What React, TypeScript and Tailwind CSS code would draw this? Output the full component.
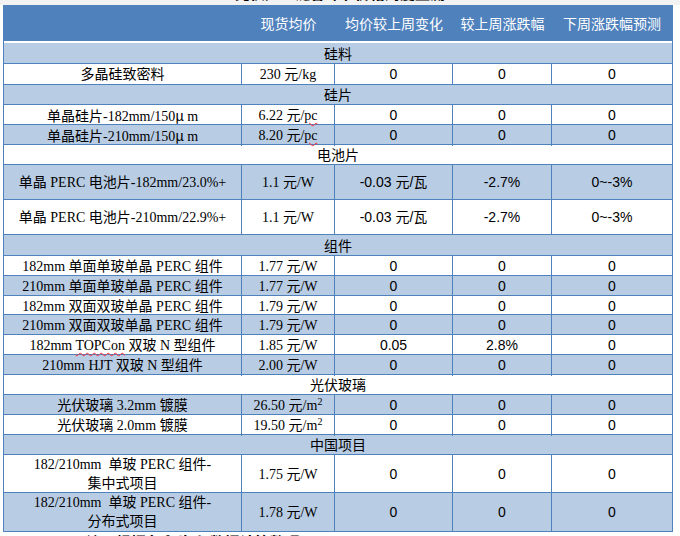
import React from 'react';

type DataRowProps = {
  name: React.ReactNode;
  price: React.ReactNode;
  change: string;
  pct: string;
  forecast: string;
  shade: boolean;
  h: string;
};

const serif = "font-['Liberation_Serif','Noto_Sans_CJK_SC',serif]";
const sans = "font-['Liberation_Sans','Noto_Sans_CJK_SC',sans-serif]";

function Section({ label, shade, h }: { label: string; shade: boolean; h: string }) {
  return (
    <div
      className={`${h} flex items-center justify-center border-b border-[#4f81bd] ${
        shade ? 'bg-[#b8cce4]' : 'bg-white'
      } font-['Noto_Sans_CJK_SC',sans-serif] text-[14px] text-black`}
    >
      {label}
    </div>
  );
}

function DataRow({ name, price, change, pct, forecast, shade, h }: DataRowProps) {
  return (
    <div
      className={`${h} grid grid-cols-[238px_93px_118px_99px_120px] border-b border-[#4f81bd] ${
        shade ? 'bg-[#b8cce4]' : 'bg-white'
      } text-[14px] text-black`}
    >
      <div className={`flex items-center justify-center border-r border-[#4f81bd] text-center leading-[19px] ${serif}`}>
        {name}
      </div>
      <div className={`flex items-center justify-center border-r border-[#4f81bd] ${serif}`}>{price}</div>
      <div className={`flex items-center justify-center border-r border-[#4f81bd] ${sans}`}>{change}</div>
      <div className={`flex items-center justify-center border-r border-[#4f81bd] ${sans}`}>{pct}</div>
      <div className={`flex items-center justify-center ${sans}`}>{forecast}</div>
    </div>
  );
}

const Squiggle = ({ children }: { children: React.ReactNode }) => (
  <span className="underline decoration-wavy decoration-red-500 decoration-1 underline-offset-2">{children}</span>
);

const Mu = () => <span className="font-['Noto_Sans_CJK_SC',sans-serif] mr-[3px]">μ</span>;

export default function App() {
  return (
    <div className="w-[680px] h-[536px] overflow-hidden bg-white">
      {/* 上方标题被截断 */}
      <div className="h-[5px] overflow-hidden bg-[#f2f2f2]">
        <div className="-mt-[17px] text-center font-['Noto_Sans_CJK_SC',sans-serif] text-[15px] font-bold leading-[20px] text-black">
          光伏产业链各环节价格周度监测
        </div>
      </div>

      <div className="ml-[3px] w-[670px] border-x border-[#4f81bd]">
        <div className="grid h-[36px] grid-cols-[238px_93px_118px_99px_120px] bg-[#4f81bd] font-['Noto_Sans_CJK_SC',sans-serif] text-[14px] text-white">
          <div />
          <div className="flex items-center justify-center">现货均价</div>
          <div className="flex items-center justify-center">均价较上周变化</div>
          <div className="flex items-center justify-center">较上周涨跌幅</div>
          <div className="flex items-center justify-center">下周涨跌幅预测</div>
        </div>
        <div className="h-[2px] bg-white" />

        <Section label="硅料" shade h="h-[21px]" />
        <DataRow name="多晶硅致密料" price="230 元/kg" change="0" pct="0" forecast="0" shade={false} h="h-[21px]" />

        <Section label="硅片" shade h="h-[20px]" />
        <DataRow
          name={<span>单晶硅片-182mm/150<Mu />m</span>}
          price={<span>6.22 元/<Squiggle>pc</Squiggle></span>}
          change="0" pct="0" forecast="0" shade={false} h="h-[20px]"
        />
        <DataRow
          name={<span>单晶硅片-210mm/150<Mu />m</span>}
          price={<span>8.20 元/<Squiggle>pc</Squiggle></span>}
          change="0" pct="0" forecast="0" shade h="h-[20px]"
        />

        <Section label="电池片" shade={false} h="h-[20px]" />
        <DataRow name="单晶 PERC 电池片-182mm/23.0%+" price="1.1 元/W" change="-0.03 元/瓦" pct="-2.7%" forecast="0~-3%" shade h="h-[35px]" />
        <DataRow name="单晶 PERC 电池片-210mm/22.9%+" price="1.1 元/W" change="-0.03 元/瓦" pct="-2.7%" forecast="0~-3%" shade={false} h="h-[35px]" />

        <Section label="组件" shade h="h-[21px]" />
        <DataRow name="182mm 单面单玻单晶 PERC 组件" price="1.77 元/W" change="0" pct="0" forecast="0" shade={false} h="h-[20px]" />
        <DataRow name="210mm 单面单玻单晶 PERC 组件" price="1.77 元/W" change="0" pct="0" forecast="0" shade h="h-[20px]" />
        <DataRow name="182mm 双面双玻单晶 PERC 组件" price="1.79 元/W" change="0" pct="0" forecast="0" shade={false} h="h-[19px]" />
        <DataRow name="210mm 双面双玻单晶 PERC 组件" price="1.79 元/W" change="0" pct="0" forecast="0" shade h="h-[20px]" />
        <DataRow
          name={<span>182mm <Squiggle>TOPCon</Squiggle> 双玻 N 型组件</span>}
          price="1.85 元/W" change="0.05" pct="2.8%" forecast="0" shade={false} h="h-[20px]"
        />
        <DataRow name="210mm HJT 双玻 N 型组件" price="2.00 元/W" change="0" pct="0" forecast="0" shade h="h-[20px]" />

        <Section label="光伏玻璃" shade={false} h="h-[20px]" />
        <DataRow name="光伏玻璃 3.2mm 镀膜" price={<span>26.50 元/m<sup className="text-[10px]">2</sup></span>} change="0" pct="0" forecast="0" shade h="h-[20px]" />
        <DataRow name="光伏玻璃 2.0mm 镀膜" price={<span>19.50 元/m<sup className="text-[10px]">2</sup></span>} change="0" pct="0" forecast="0" shade={false} h="h-[20px]" />

        <Section label="中国项目" shade h="h-[20px]" />
        <DataRow
          name={<span>182/210mm&nbsp; 单玻 PERC 组件-<br />集中式项目</span>}
          price="1.75 元/W" change="0" pct="0" forecast="0" shade={false} h="h-[38px]"
        />
        <DataRow
          name={<span>182/210mm&nbsp; 单玻 PERC 组件-<br />分布式项目</span>}
          price="1.78 元/W" change="0" pct="0" forecast="0" shade h="h-[39px]"
        />
      </div>

      {/* 下方注释被截断 */}
      <div className="h-[6px] overflow-hidden pl-[86px]">
        <div className="font-['Noto_Sans_CJK_SC',sans-serif] text-[15px] font-bold leading-[20px] text-black">
          注：根据 infolink 数据计算整理
        </div>
      </div>
    </div>
  );
}
